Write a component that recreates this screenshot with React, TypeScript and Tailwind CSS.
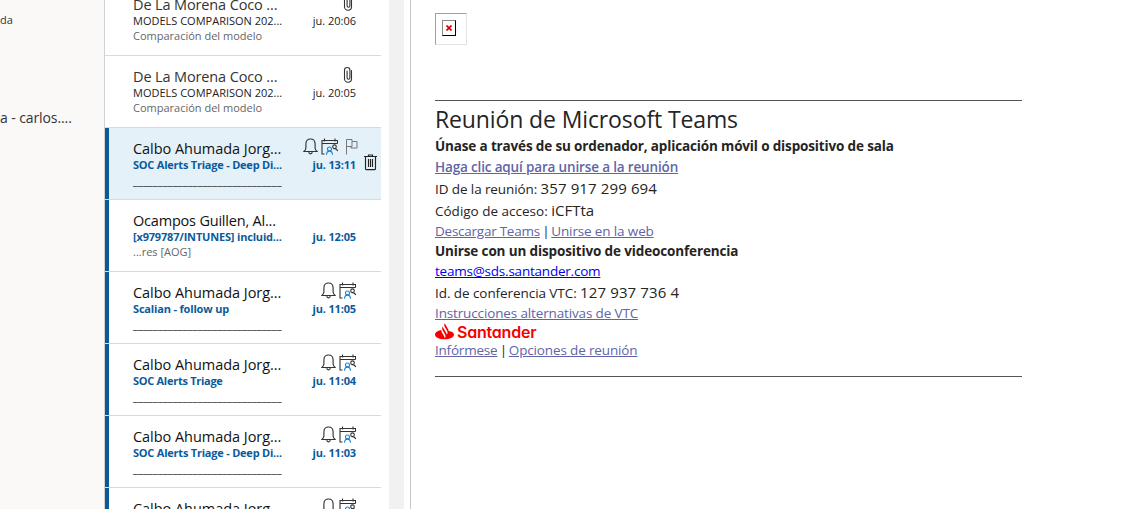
import React from "react";

type Mail = {
  from: string;
  subject: string;
  preview: string;
  time: string;
  fromCls?: string;
  subjectCls?: string;
  unread?: boolean;
  selected?: boolean;
  icons?: "clip" | "meeting";
};

const RULE = "______________________________";

const mails: Mail[] = [
  { from: "De La Morena Coco ...", fromCls: "tracking-[-0.13px]", subject: "MODELS COMPARISON 202...", preview: "Comparación del modelo", time: "ju. 20:06", icons: "clip" },
  { from: "De La Morena Coco ...", fromCls: "tracking-[-0.13px]", subject: "MODELS COMPARISON 202...", preview: "Comparación del modelo", time: "ju. 20:05", icons: "clip" },
  { from: "Calbo Ahumada Jorg...", subject: "SOC Alerts Triage - Deep Di...", subjectCls: "tracking-[-0.22px]", preview: RULE, time: "ju. 13:11", unread: true, selected: true, icons: "meeting" },
  { from: "Ocampos Guillen, Al...", fromCls: "tracking-[-0.2px]", subject: "[x979787/INTUNES] incluid...", subjectCls: "tracking-[-0.18px]", preview: "...res [AOG]", time: "ju. 12:05", unread: true },
  { from: "Calbo Ahumada Jorg...", subject: "Scalian - follow up", subjectCls: "tracking-[-0.17px]", preview: RULE, time: "ju. 11:05", unread: true, icons: "meeting" },
  { from: "Calbo Ahumada Jorg...", subject: "SOC Alerts Triage", subjectCls: "tracking-[-0.28px]", preview: RULE, time: "ju. 11:04", unread: true, icons: "meeting" },
  { from: "Calbo Ahumada Jorg...", subject: "SOC Alerts Triage - Deep Di...", subjectCls: "tracking-[-0.22px]", preview: RULE, time: "ju. 11:03", unread: true, icons: "meeting" },
  { from: "Calbo Ahumada Jorg...", subject: "", preview: "", time: "", unread: true, icons: "meeting" },
];

function Clip() {
  return (
    <svg width="10" height="18" viewBox="0 0 10 18" fill="none" stroke="#333" strokeWidth="1.1" strokeLinecap="round">
      <path d="M8.500 4.500v8.200a3.500 3.500 0 0 1-7 0V4.200a2.700 2.700 0 0 1 5.400 0v7.600a1.400 1.400 0 0 1-2.800 0V5" />
    </svg>
  );
}

function Bell() {
  return (
    <svg width="15" height="17" viewBox="0 0 15 17" fill="none" stroke="#333" strokeWidth="1.15" strokeLinejoin="round">
      <path d="M.7 13.500c1.600-.8 2.200-1.800 2.200-3.400V6C2.900 3 4.700 1 7.500 1s4.600 2 4.600 5v4.100c0 1.600.6 2.600 2.200 3.400z" />
      <path d="M5.800 14c.1 1.100.8 1.800 1.700 1.800s1.600-.7 1.700-1.800" />
    </svg>
  );
}

function Calendar() {
  return (
    <svg width="17" height="17" viewBox="0 0 17 17" fill="none" strokeWidth="1.1">
      <path d="M3.500 16H1V2.500h15.500v3M1 5.500h15.500M3.500 .5v3M14 .5v3" stroke="#333" />
      <circle cx="13.500" cy="8.700" r="1.800" stroke="#333" />
      <path d="M12.500 10.800c2-.5 3.600.2 4.100 2.200" stroke="#333" />
      <circle cx="8.500" cy="11" r="2" stroke="#1683d8" />
      <path d="M5.500 16.800c.1-2.400 1.200-3.700 3-3.700s2.900 1.300 3 3.700" stroke="#1683d8" />
    </svg>
  );
}

function Flag() {
  return (
    <svg width="12" height="17" viewBox="0 0 12 17" fill="none" stroke="#777" strokeWidth="1">
      <path d="M.5 16.500V1.500h5.500v7H.5M6 3.500h5v6.500H5V8.500" />
    </svg>
  );
}

function Trash() {
  return (
    <svg width="13" height="17" viewBox="0 0 13 17" fill="none" stroke="#222" strokeWidth="1.15">
      <path d="M0 2.500h13M4.500 2.500V1h4v1.500M1.500 2.500v12.300c0 .5.300.8.800.8h8.400c.5 0 .8-.3.800-.8V2.500M4.500 5v8M6.500 5v8M8.500 5v8" />
    </svg>
  );
}

function Row({ m }: { m: Mail }) {
  return (
    <div className={`flex h-[72px] shrink-0 border-b border-[#dadada] ${m.selected ? "bg-[#e5f1f9]" : "bg-white"}`}>
      <div className={`w-1 shrink-0 ${m.unread ? "bg-[#0b5a96]" : ""}`} />
      <div className="ml-6 flex w-[160px] flex-col whitespace-nowrap pt-[11px]">
        <div className={`h-[19px] text-[14.5px] leading-5 ${m.unread ? "tracking-[-0.04px] text-[#111]" : "text-[#333]"}`}><span className={m.fromCls}>{m.from}</span></div>
        <div className={`h-[13px] text-[11px] leading-[13px] ${m.unread ? "font-bold text-[#0b5a9c]" : "text-[#222]"}`}><span className={m.subjectCls}>{m.subject}</span></div>
        {m.preview === RULE ? (
          <div className="mt-0.5 h-4 text-[11px] leading-4 tracking-[0.14px] text-[#222]">{m.preview}</div>
        ) : (
          <div className="mt-px h-4 text-[11px] leading-4 text-[#666]">{m.preview}</div>
        )}
      </div>
      <div className="flex w-[63px] flex-col items-end whitespace-nowrap pt-[10px]">
        <div className={`flex h-5 gap-[3px] ${m.selected ? "-mr-0.5" : ""}`}>
          {m.icons === "clip" && <div className="mr-[3px]"><Clip /></div>}
          {m.icons === "meeting" && <><Bell /><Calendar /></>}
          {m.selected && <div className="ml-[5px]"><Flag /></div>}
        </div>
        <div className={`text-[11px] leading-[13px] ${m.unread ? "font-bold tracking-[-0.15px] text-[#0b5a9c]" : "text-[#222]"}`}>{m.time}</div>
      </div>
      {m.selected && <div className="ml-2 mt-[26px]"><Trash /></div>}
    </div>
  );
}

function Bar() {
  return <span className="pl-[2.5px] pr-[2px] tracking-[-0.5px]">|</span>;
}

export default function App() {
  return (
    <div className="flex h-[509px] w-[1124px] overflow-hidden bg-white font-['Open_Sans',sans-serif]">
      <aside className="flex w-[105px] shrink-0 flex-col border-r border-[#d2d2d2] bg-[#faf9f8] whitespace-nowrap text-[#333]">
        <div className="mt-[12px] h-4 text-[11px] leading-4">da</div>
        <div className="mt-[80px] h-5 text-[14px] leading-5 tracking-[-0.1px]">a - carlos....</div>
      </aside>
      <section className="-mt-4 flex w-[276px] shrink-0 flex-col">
        {mails.map((m, i) => <Row key={i} m={m} />)}
      </section>
      <div className="ml-2 w-[15px] shrink-0 bg-[#f1f1f1]" />
      <main className="ml-[6px] flex grow flex-col border-l border-[#c8c8c8] pl-6 whitespace-nowrap text-[13.5px] text-[#252424]">
        <div className="mt-[13px] h-8 w-8 border border-t-[#a0a0a0] border-r-[#e3e3e3] border-b-[#e3e3e3] border-l-[#a0a0a0] p-[6px]">
          <div className="flex h-4 w-[14px] items-center justify-center border border-t-[#888] border-r-black border-b-black border-l-[#888]">
            <svg width="6" height="6" viewBox="0 0 6 6" stroke="#d00" strokeWidth="1.7"><path d="M.5 .5l5 5M5.500 .5l-5 5" /></svg>
          </div>
        </div>
        <div className="mt-[55px] w-[587px] border-t border-[#555]" />
        <div className="mt-[2px] h-[33px] text-[23px] leading-[33px] tracking-[-0.12px]">Reunión de Microsoft Teams</div>
        <div className="h-5 font-bold leading-5 tracking-[-0.15px]">Únase a través de su ordenador, aplicación móvil o dispositivo de sala</div>
        <div className="h-[21px] font-semibold leading-[22px] tracking-[-0.155px] text-[#6264a7] underline">Haga clic aquí para unirse a la reunión</div>
        <div className="h-[22px] leading-[22px]"><span className="tracking-[-0.1px]">ID de la reunión: </span><span className="text-[15px] tracking-[0.12px]">357 917 299 694</span></div>
        <div className="h-[22px] leading-[22px]"><span>Código de acceso: </span><span className="text-[15px]">iCFTta</span></div>
        <div className="h-5 leading-5"><span className="tracking-[-0.25px] text-[#6264a7] underline">Descargar Teams</span><Bar /><span className="tracking-[-0.14px] text-[#6264a7] underline">Unirse en la web</span></div>
        <div className="h-5 font-bold leading-5 tracking-[-0.135px]">Unirse con un dispositivo de videoconferencia</div>
        <div className="h-5 leading-5 tracking-[-0.22px] text-[#0000ee] underline">teams@sds.santander.com</div>
        <div className="h-[22px] leading-[22px]"><span className="tracking-[-0.07px]">Id. de conferencia VTC: </span><span className="text-[15px] tracking-[0.13px]">127 937 736 4</span></div>
        <div className="h-5 leading-5 tracking-[-0.14px] text-[#6264a7] underline">Instrucciones alternativas de VTC</div>
        <div className="flex h-[17px] items-center gap-[3px]">
          <svg width="19" height="17" viewBox="0 0 19 17" fill="#f50000"><path d="M13.600 8c0-.7-.2-1.400-.6-2L10.300 1.300C10.100.9 9.900.5 9.900 0l-.1.200c-.7 1.200-.7 2.600 0 3.800l2.200 3.800c.7 1.200.7 2.600 0 3.800l-.1.200c0-.5-.2-1-.4-1.400l-2-3.500-1.300-2.200c-.2-.4-.4-.8-.4-1.300l-.1.200c-.7 1.200-.7 2.600 0 3.800l2.300 4c.7 1.200.7 2.600 0 3.800l-.1.200c0-.5-.2-1-.4-1.400L6.700 9c-.4-.7-.5-1.400-.5-2.100C2.700 7.700 0 9.400 0 11.400 0 14.200 4.200 16.300 9.500 16.300s9.500-2.100 9.500-4.900c0-1.600-2.100-2.700-5.400-3.400z" /></svg>
          <span className="font-['Inter'] text-[16px] font-semibold leading-4 tracking-[-0.22px] text-[#f50000] [font-feature-settings:'cv11']">Santander</span>
        </div>
        <div className="h-5 leading-5"><span className="tracking-[-0.22px] text-[#6264a7] underline">Infórmese</span><Bar /><span className="tracking-[-0.14px] text-[#6264a7] underline">Opciones de reunión</span></div>
        <div className="mt-[16px] w-[587px] border-t border-[#555]" />
      </main>
    </div>
  );
}
